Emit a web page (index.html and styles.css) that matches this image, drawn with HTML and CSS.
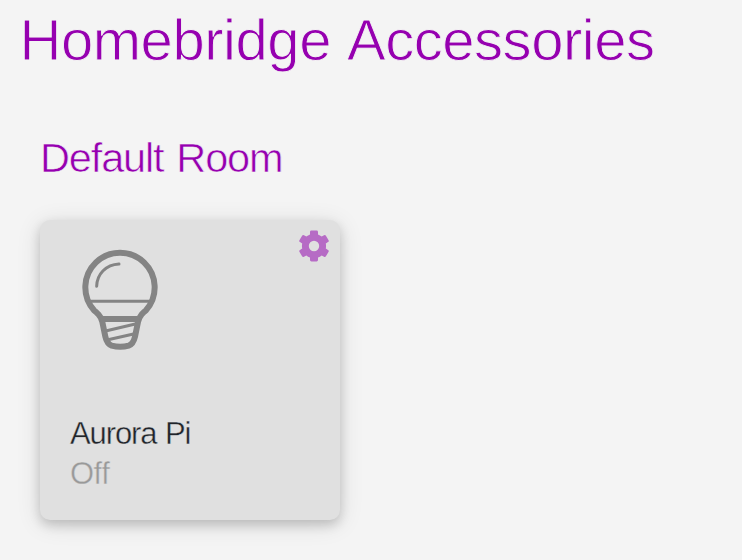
FILE: index.html
```html
<!DOCTYPE html>
<html lang="en">
<head>
<meta charset="utf-8">
<title>Homebridge Accessories</title>
<link rel="stylesheet" href="styles.css">
</head>
<body>
<main>
  <h1>Homebridge Accessories</h1>
  <section class="room">
    <h2>Default Room</h2>
    <article class="card">
      <svg class="bulb" viewBox="0 0 300 360" aria-hidden="true">
        <g fill="none" stroke="#848484" stroke-width="18">
          <path d="M97 246Q95 234 85 223Q80 217 72 211A104 104 0 1 1 228 211Q220 217 215 223Q206 234 204 246L195 290Q190 312 176 317Q151 324 125 317Q111 312 106 290Z"/>
          <path d="M92 237H209"/>
          <path d="M59 184H242" stroke-width="9"/>
          <path d="M110 272L199 251M114 299L194 281" stroke-width="9"/>
          <path d="M80 139C81 102 108 74 147 72" stroke-width="9" stroke-linecap="round"/>
        </g>
      </svg>
      <svg class="gear" viewBox="0 0 32 32" aria-hidden="true">
        <path fill-rule="evenodd" fill="#b66bc5" d="M12 2Q12 .6 13.4 .6H18.6Q20 .6 20 2V4.4Q22 5.1 23.7 6.5L26 5.2Q27.2 4.5 27.9 5.7L30.6 10.2Q31.2 11.4 30 12.1L27.8 13.4Q28.3 16 27.8 18.6L30 19.9Q31.2 20.6 30.6 21.8L27.9 26.3Q27.2 27.5 26 26.8L23.7 25.5Q22 26.9 20 27.6V30Q20 31.4 18.6 31.4H13.4Q12 31.4 12 30V27.6Q10 26.9 8.3 25.5L6 26.8Q4.8 27.5 4.1 26.3L1.4 21.8Q.8 20.6 2 19.9L4.2 18.6Q3.7 16 4.2 13.4L2 12.1Q.8 11.4 1.4 10.2L4.1 5.7Q4.8 4.5 6 5.2L8.3 6.5Q10 5.1 12 4.4ZM16 10.8A5.2 5.2 0 1 0 16 21.2A5.2 5.2 0 1 0 16 10.8Z"/>
      </svg>
      <div class="labels">
        <div class="name">Aurora Pi</div>
        <div class="status">Off</div>
      </div>
    </article>
  </section>
</main>
</body>
</html>
```
FILE: styles.css
```css
body {
  margin: 0;
  background: #f4f4f4;
  font-family: "Liberation Sans", Arial, sans-serif;
}
main {
  box-sizing: border-box;
  min-height: 560px;
  padding: 0 20px;
}
h1, h2 {
  margin: 0;
  color: #9600b0;
  font-weight: 400;
  white-space: nowrap;
}
h1 {
  font-size: 58px;
  line-height: 80px;
  letter-spacing: -.45px;
  word-spacing: 3.5px;
  text-indent: -.5px;
  -webkit-text-stroke: .9px #f4f4f4;
}
.room { padding: 53px 20px 0; }
h2 {
  font-size: 41.5px;
  line-height: 50px;
  letter-spacing: -1.15px;
  word-spacing: 2.5px;
  -webkit-text-stroke: .6px #f4f4f4;
}
.card {
  position: relative;
  display: flex;
  flex-direction: column;
  justify-content: space-between;
  box-sizing: border-box;
  width: 300px;
  height: 300px;
  margin-top: 37px;
  padding: 20px 30px 26px;
  border-radius: 10px;
  background: #e0e0e0;
  box-shadow: 0 5px 11px rgba(0, 0, 0, .16), 0 4px 24px rgba(0, 0, 0, .12);
}
.bulb { width: 100px; height: 120px; }
.gear {
  position: absolute;
  top: 10px;
  right: 10px;
  width: 32px;
  height: 32px;
}
.labels {
  font-size: 31px;
  line-height: 40px;
  letter-spacing: -1.1px;
  word-spacing: 1px;
  -webkit-text-stroke: .4px #e0e0e0;
}
.name { color: #20242a; }
.status { color: #999; letter-spacing: -.5px; }
```
